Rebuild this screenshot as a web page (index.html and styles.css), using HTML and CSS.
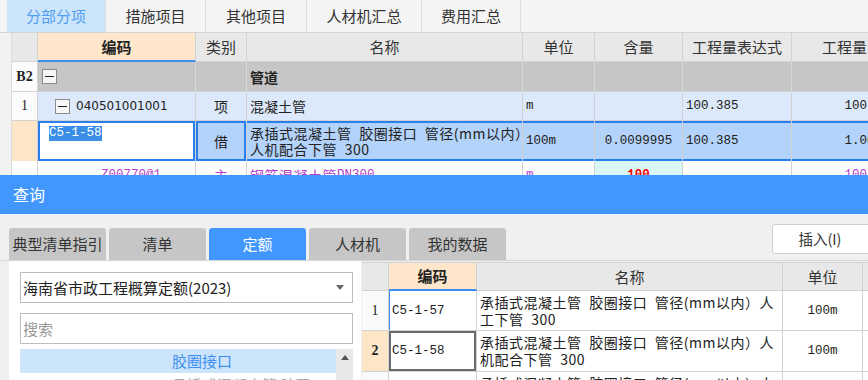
FILE: index.html
```html
<!DOCTYPE html>
<html lang="zh">
<head>
<meta charset="utf-8">
<title>查询</title>
<link rel="stylesheet" href="styles.css">
</head>
<body>
<div class="main">
  <div class="tabs">
    <div class="tab active w1">分部分项</div>
    <div class="tab w2">措施项目</div>
    <div class="tab w3">其他项目</div>
    <div class="tab w4">人材机汇总</div>
    <div class="tab w1">费用汇总</div>
  </div>
  <div class="grid">
    <div class="row h-head head">
      <div class="c gut"></div>
      <div class="c num"></div>
      <div class="c ctr code-h">编码</div>
      <div class="c ctr">类别</div>
      <div class="c ctr">名称</div>
      <div class="c ctr">单位</div>
      <div class="c ctr">含量</div>
      <div class="c ctr">工程量表达式</div>
      <div class="c ctr">工程量</div>
    </div>
    <div class="row h-b2 gray">
      <div class="c gut"></div>
      <div class="c num ctr serif b">B2</div>
      <div class="c tree-b2"><span class="box"></span></div>
      <div class="c"></div>
      <div class="c b">管道</div>
      <div class="c"></div>
      <div class="c"></div>
      <div class="c"></div>
      <div class="c"></div>
    </div>
    <div class="row h-r1 lblue">
      <div class="c gut"></div>
      <div class="c num ctr serif">1</div>
      <div class="c tree-r1"><span class="box"></span><span class="code">040501001001</span></div>
      <div class="c ctr">项</div>
      <div class="c">混凝土管</div>
      <div class="c mono">m</div>
      <div class="c"></div>
      <div class="c mono">100.385</div>
      <div class="c rt mono">100.385</div>
    </div>
    <div class="row h-r3 sblue">
      <div class="c gut"></div>
      <div class="c num peach"></div>
      <div class="c edit"><span class="hl mono">C5-1-58</span></div>
      <div class="c ctr sel focus">借</div>
      <div class="c sel name2">承插式混凝土管 胶圈接口 管径(mm以内）<br>人机配合下管 300</div>
      <div class="c sel mono">100m</div>
      <div class="c sel ctr mono">0.0099995</div>
      <div class="c sel mono">100.385</div>
      <div class="c sel rt mono">1.00385</div>
    </div>
    <div class="row h-r4 purple">
      <div class="c gut"></div>
      <div class="c num"></div>
      <div class="c tree-r4"><span class="mono">Z00770@1</span></div>
      <div class="c ctr">主</div>
      <div class="c name2">钢筋混凝土管 <span class="mono">DN300</span></div>
      <div class="c mono">m</div>
      <div class="c ctr cyan mono b">100</div>
      <div class="c"></div>
      <div class="c rt mono">100.385</div>
    </div>
  </div>
</div>

<div class="dialog">
  <div class="dlg-title">查询</div>
  <div class="toolbar">
    <div class="dtab">典型清单指引</div>
    <div class="dtab">清单</div>
    <div class="dtab on">定额</div>
    <div class="dtab">人材机</div>
    <div class="dtab">我的数据</div>
    <div class="btn">插入(I)</div>
  </div>
  <div class="content">
    <div class="left">
      <div class="select"><span>海南省市政工程概算定额(2023)</span><span class="caret"></span></div>
      <div class="search">搜索</div>
      <div class="tree">
        <div class="items">
          <div class="item on">胶圈接口</div>
          <div class="item">承插式混凝土管 胶圈</div>
        </div>
        <div class="scroll"><span class="up"></span></div>
      </div>
    </div>
    <div class="right">
      <div class="brow bh head">
        <div class="c num"></div>
        <div class="c ctr code-h">编码</div>
        <div class="c ctr">名称</div>
        <div class="c ctr">单位</div>
        <div class="c"></div>
      </div>
      <div class="brow br1">
        <div class="c num ctr serif">1</div>
        <div class="c mono bl">C5-1-57</div>
        <div class="c name2">承插式混凝土管 胶圈接口 管径(mm以内）人<br>工下管 300</div>
        <div class="c ctr mono">100m</div>
        <div class="c"></div>
      </div>
      <div class="brow br2">
        <div class="c num ctr serif b peach">2</div>
        <div class="c mono cursel">C5-1-58</div>
        <div class="c name2">承插式混凝土管 胶圈接口 管径(mm以内）人<br>机配合下管 300</div>
        <div class="c ctr mono">100m</div>
        <div class="c"></div>
      </div>
      <div class="brow br3">
        <div class="c num ctr serif">3</div>
        <div class="c mono">C5-1-59</div>
        <div class="c name2">承插式混凝土管 胶圈接口 管径(mm以内）人<br>工下管 400</div>
        <div class="c ctr mono">100m</div>
        <div class="c"></div>
      </div>
    </div>
  </div>
</div>
</body>
</html>
```

FILE: styles.css
```css
* { box-sizing: border-box; margin: 0; padding: 0; }
html, body { width: 868px; height: 380px; overflow: hidden; }
body {
  font-family: "Noto Sans CJK SC", "Noto Sans", sans-serif;
  font-size: 14px;
  color: #222;
  background: #f0f0f0;
}

/* ---------- top area ---------- */
.main { height: 175px; overflow: hidden; background: #f4f4f4; }
.tabs {
  display: flex;
  height: 33px;
  padding-left: 7px;
  border-bottom: 1px solid #d4d4d4;
  background: #f4f4f4;
}
.tab {
  height: 32px;
  line-height: 32px;
  text-align: center;
  font-size: 15px;
  color: #333;
  border-right: 1px solid #dcdcdc;
}
.tab.active { background: #cde5fa; color: #4d9cf4; }
.w1 { width: 99px; }
.w2 { width: 100px; }
.w3 { width: 101px; }
.w4 { width: 115px; }

.grid { width: 898px; }
.row {
  display: grid;
  grid-template-columns: 12px 26px 158px 51px 276px 72px 88px 109px 106px;
}
.c {
  display: flex;
  align-items: center;
  border-right: 1px solid #d2d2d2;
  border-bottom: 1px solid #d2d2d2;
  padding: 0 3px;
  white-space: nowrap;
  overflow: hidden;
  line-height: 16px;
}
.ctr { justify-content: center; }
.rt { justify-content: flex-end; padding-right: 0; }
.b { font-weight: bold; }
.serif { font-family: "Liberation Serif", serif; font-size: 14px; }
.mono { font-family: "Liberation Mono", monospace; font-size: 12.5px; letter-spacing: 0; word-spacing: 0; }
.code { font-family: "DejaVu Sans", sans-serif; font-size: 12px; }

.head .c { background: #e8e8e8; font-size: 15px; color: #333; }
.head .c.code-h { background: #fde6ca; font-weight: bold; border-bottom: 2px solid #3d8ef2; color: #222; }
.gut { background: #f2f2f2 !important; border-bottom-color: #f2f2f2; border-right-color: #dadada; }
.num { background: #fbfbfb; }
.peach { background: #fde5c8 !important; }

.h-head { height: 29px; }
.h-b2 { height: 30px; }
.h-r1 { height: 29px; }
.h-r3 { height: 40px; }
.h-r4 { height: 29px; }

.gray .c:not(.gut):not(.num) { background: #c6c6c6; border-right-color: #d8d8d8; }
.lblue .c:not(.gut):not(.num) { background: #dce9fb; }
.sblue .c.sel { background: #b4d3fa; border-bottom: none; box-shadow: inset 0 2px #2a7fee, inset 0 -2px #2a7fee; }
.sblue .c.focus { box-shadow: inset 0 0 0 2px #2a7fee; }
.sblue .c.num, .sblue .c.gut { border-bottom: none; }
.edit {
  background: #fff;
  border-bottom: none;
  box-shadow: inset 0 0 0 2px #2a7fee;
  align-items: flex-start;
  padding-left: 11px;
  padding-top: 5px;
}
.hl { background: #3b8ee8; color: #fff; line-height: 15px; }
.name2 { line-height: 16px; letter-spacing: 0.5px; word-spacing: 4px; }

.box {
  width: 15px;
  height: 15px;
  border: 1px solid #8c8c8c;
  background: #f6f6f6;
  display: flex;
  align-items: center;
  justify-content: center;
  flex-shrink: 0;
}
.box::after { content: ""; width: 9px; height: 1px; background: #222; }
.tree-b2 {
  padding-left: 4px;
  background-image: linear-gradient(#f4b777, #f4b777);
  background-size: 1px 7px;
  background-position: 11px 23px;
  background-repeat: no-repeat;
}
.tree-r1 {
  padding-left: 17px;
  gap: 6px;
  background-image:
    linear-gradient(#f4b777, #f4b777),
    linear-gradient(#f4b777, #f4b777),
    linear-gradient(#f4b777, #f4b777);
  background-size: 1px 14px, 6px 1px, 1px 8px;
  background-position: 12px 0, 12px 14px, 24px 21px;
  background-repeat: no-repeat;
}
.tree-r4 {
  padding-left: 63px;
  background-image:
    linear-gradient(#f4b777, #f4b777),
    linear-gradient(#f4b777, #f4b777);
  background-size: 1px 100%, 1px 100%;
  background-position: 24px 0, 36px 0;
  background-repeat: no-repeat;
}
.purple .c { color: #b53dc8; background: #fff; }
.purple .c.gut { background: #f2f2f2; }
.purple .c.cyan { background: #d8f7f6; color: #f00; }

/* ---------- dialog ---------- */
.dialog { height: 205px; background: #f0f0f0; }
.dlg-title {
  height: 39px;
  line-height: 39px;
  background: #4297ff;
  color: #fff;
  font-size: 16px;
  padding-left: 13px;
}
.toolbar {
  display: flex;
  align-items: flex-end;
  height: 47px;
  padding-left: 9px;
  border-bottom: 1px solid #d6d6d6;
}
.dtab {
  width: 97px;
  height: 32px;
  line-height: 32px;
  margin-right: 3px;
  border-radius: 3px 3px 0 0;
  background: #c6c6c6;
  text-align: center;
  font-size: 15px;
  color: #333;
  flex-shrink: 0;
}
.dtab.on { background: #4297ff; color: #fff; }
.btn {
  margin-left: auto;
  margin-right: -6px;
  align-self: flex-start;
  margin-top: 10px;
  width: 102px;
  height: 30px;
  line-height: 28px;
  border: 1px solid #cfcfcf;
  border-radius: 3px;
  background: #fff;
  text-align: center;
  font-size: 14.5px;
  color: #333;
  padding-right: 6px;
  flex-shrink: 0;
}

.content { display: flex; padding-left: 9px; height: 119px; overflow: hidden; }
.left {
  width: 352px;
  flex-shrink: 0;
  background: #fff;
  padding: 11px 8px 0 11px;
}
.select {
  height: 31px;
  border: 1px solid #bdbdbd;
  display: flex;
  align-items: center;
  justify-content: space-between;
  padding: 0 8px 0 2px;
  font-size: 15px;
  color: #222;
}
.caret {
  width: 0;
  height: 0;
  border-left: 4px solid transparent;
  border-right: 4px solid transparent;
  border-top: 5px solid #666;
}
.search {
  margin-top: 10px;
  height: 31px;
  border: 1px solid #bdbdbd;
  padding-left: 2px;
  color: #999;
  font-size: 15px;
  display: flex;
  align-items: center;
}
.tree { margin-top: 5px; display: flex; }
.items { width: 316px; }
.item {
  height: 24px;
  line-height: 24px;
  padding-left: 152px;
  font-size: 15px;
  color: #aaa;
  white-space: nowrap;
}
.item.on { background: #cce5fa; color: #3d8ef0; }
.scroll {
  width: 17px;
  height: 60px;
  background: #e8e8e8;
  display: flex;
  justify-content: center;
  padding-top: 6px;
}
.up {
  width: 0;
  height: 0;
  border-left: 4px solid transparent;
  border-right: 4px solid transparent;
  border-bottom: 5px solid #555;
}

.right {
  flex: 1;
  margin-left: 1px;
  margin-top: 1px;
  border-top: 1px solid #d2d2d2;
  overflow: hidden;
}
.brow {
  display: grid;
  grid-template-columns: 27px 88px 306px 80px 60px;
  width: 561px;
  background: #fff;
}
.brow .c { background: #fff; }
.brow .c.num { background: #fafafa; }
.brow.head .c { background: #e8e8e8; }
.brow.head .c.code-h { background: #fde6ca; }
.bh { height: 28px; }
.br1 { height: 40px; }
.br2 { height: 41px; }
.br3 { height: 40px; }
.bl { box-shadow: inset 1px 0 #3d8ef2; }
.cursel { box-shadow: inset 0 0 0 2px #6a6a6a, inset 1px 0 #3d8ef2; }
.brow .name2 { line-height: 17px; }
```
